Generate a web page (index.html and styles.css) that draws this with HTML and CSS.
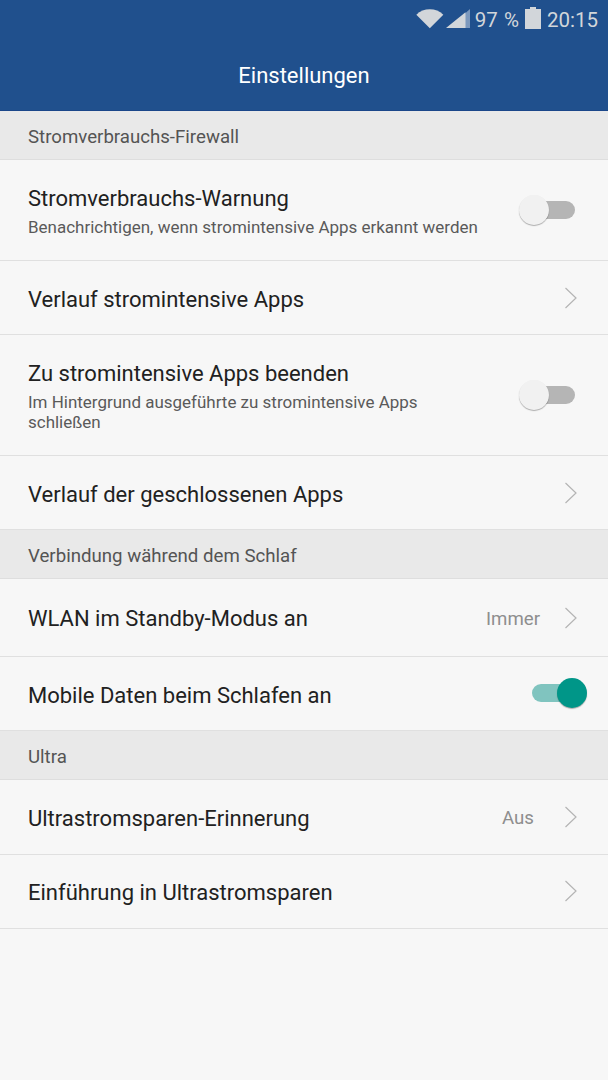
FILE: index.html
```html
<!DOCTYPE html>
<html lang="de">

<head>
    <meta charset="UTF-8">
    <title>Einstellungen</title>
    <link rel="stylesheet" href="styles.css">
</head>

<body>
    <header class="header">
        <div class="status">
            <svg class="wifi" width="28" height="20" viewBox="0 0 28 20"><path d="M0.3 5.8C7.5-1.5 20.1-1.5 27.3 5.8L13.8 19.3z" /></svg>
            <svg class="signal" width="24" height="19" viewBox="0 0 24 19"><path class="dim" d="M19 4.5L24 0v19H19z" /><path d="M0 19L19.5 3.3V19z" /></svg>
            <span class="percent">97 %</span>
            <svg class="battery" width="16" height="22" viewBox="0 0 16 22"><path d="M5 0h6v2h5v20H0V2h5z" /></svg>
            <span class="clock">20:15</span>
        </div>
        <h1>Einstellungen</h1>
    </header>

    <h2>Stromverbrauchs-Firewall</h2>
    <ul class="list">
        <li class="row two-lines">
            <div class="text">
                <div class="title">Stromverbrauchs-Warnung</div>
                <div class="sub">Benachrichtigen, wenn stromintensive Apps erkannt werden</div>
            </div>
            <span class="switch"></span>
        </li>
        <li class="row">
            <div class="title">Verlauf stromintensive Apps</div>
            <svg class="arrow" width="13" height="22" viewBox="0 0 13 22"><path d="M1.5 1L12 11L1.5 21" /></svg>
        </li>
        <li class="row three-lines">
            <div class="text">
                <div class="title">Zu stromintensive Apps beenden</div>
                <div class="sub">Im Hintergrund ausgeführte zu stromintensive Apps schließen</div>
            </div>
            <span class="switch"></span>
        </li>
        <li class="row">
            <div class="title">Verlauf der geschlossenen Apps</div>
            <svg class="arrow" width="13" height="22" viewBox="0 0 13 22"><path d="M1.5 1L12 11L1.5 21" /></svg>
        </li>
    </ul>

    <h2>Verbindung während dem Schlaf</h2>
    <ul class="list">
        <li class="row tall">
            <div class="title">WLAN im Standby-Modus an</div>
            <span class="value">Immer</span>
            <svg class="arrow" width="13" height="22" viewBox="0 0 13 22"><path d="M1.5 1L12 11L1.5 21" /></svg>
        </li>
        <li class="row">
            <div class="title">Mobile Daten beim Schlafen an</div>
            <span class="switch on"></span>
        </li>
    </ul>

    <h2>Ultra</h2>
    <ul class="list">
        <li class="row reminder">
            <div class="title">Ultrastromsparen-Erinnerung</div>
            <span class="value short">Aus</span>
            <svg class="arrow" width="13" height="22" viewBox="0 0 13 22"><path d="M1.5 1L12 11L1.5 21" /></svg>
        </li>
        <li class="row last">
            <div class="title">Einführung in Ultrastromsparen</div>
            <svg class="arrow" width="13" height="22" viewBox="0 0 13 22"><path d="M1.5 1L12 11L1.5 21" /></svg>
        </li>
    </ul>
</body>

</html>
```
FILE: styles.css
```css
* {
    box-sizing: border-box;
}

body {
    margin: 0;
    min-height: 100vh;
    font-family: Roboto, sans-serif;
    background-color: #f7f7f7;
    color: #212121;
}

/* Header */

.header {
    height: 111px;
    background-color: #20508d;
    border-bottom: 1px solid #1b478a;
}

.status {
    display: flex;
    height: 39px;
    padding-right: 10px;
    justify-content: flex-end;
    align-items: center;
    font-size: 20.5px;
    color: #d2d6da;
}

.status svg {
    fill: #d2d6da;
}

.status .dim {
    fill: #7b98bd;
}

.wifi {
    margin: 0 2px 2px 0;
}

.signal {
    margin: 0 5px 2px 0;
}

.percent {
    word-spacing: 1px;
}

.battery {
    margin: 0 6px 3px 6px;
}

h1 {
    margin: 0;
    line-height: 74px;
    font-size: 22px;
    font-weight: 400;
    text-align: center;
    color: #fff;
}

/* Section titles */

h2 {
    height: 49px;
    margin: 0;
    padding-left: 28px;
    line-height: 52px;
    font-size: 18.65px;
    font-weight: 400;
    color: #545454;
    background-color: #e9e9e9;
    border-bottom: 1px solid #dedede;
}

/* Rows */

.list {
    margin: 0;
    padding: 0;
    list-style: none;
}

.row {
    display: flex;
    height: 74px;
    padding: 0 31px 0 28px;
    align-items: center;
    border-bottom: 1px solid #e0e0e0;
}

.row.two-lines {
    height: 101px;
}

.row.three-lines {
    height: 121px;
}

.row.tall {
    height: 78px;
}

.row.reminder {
    height: 75px;
}

.row.last {
    padding-bottom: 2px;
}

.text {
    max-width: 452px;
}

.three-lines .text {
    max-width: 420px;
}

.title {
    line-height: 32px;
    font-size: 22px;
    white-space: nowrap;
}

.row > .title {
    padding-top: 4px;
}

.row.tall > .title {
    padding-top: 2px;
}

.sub {
    margin-top: 2px;
    line-height: 20px;
    font-size: 16.98px;
    color: #5a5a5a;
}

.arrow {
    flex: none;
    margin-left: auto;
    fill: none;
    stroke: #b4b4b4;
    stroke-width: 1.2;
}

.value {
    margin-left: auto;
    padding-top: 1px;
    font-size: 18.65px;
    color: #8e8e8e;
}

.tall .value {
    padding-top: 3px;
}

.value + .arrow {
    margin-left: 24px;
}

.value.short + .arrow {
    margin-left: 30px;
}

.switch {
    display: flex;
    flex: none;
    width: 43px;
    height: 18px;
    margin: 0 2px 1px auto;
    align-items: center;
    border-radius: 9px;
    background-color: #b5b5b5;
}

.switch::before {
    content: "";
    flex: none;
    width: 30px;
    height: 30px;
    margin-left: -13px;
    border-radius: 50%;
    background-color: #f1f1f1;
    box-shadow: 0 1px 1px rgba(0, 0, 0, 0.3);
}

.switch.on {
    background-color: #80c4bf;
}

.switch.on::before {
    margin-left: 25px;
    background-color: #009688;
}
```
